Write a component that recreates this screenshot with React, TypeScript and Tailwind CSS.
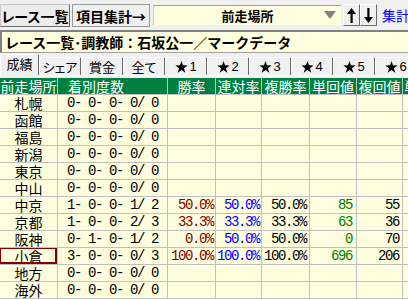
import React from "react";

const jp = "font-['Noto_Sans_CJK_JP','Noto_Sans_CJK_SC',sans-serif]";
const mono = "font-['Liberation_Mono','DejaVu_Sans_Mono',monospace] text-[14px] tracking-[-1.4px] whitespace-pre";

type Row = {
  place: string;
  counts: string;
  win?: string;
  ren?: string;
  fuku?: string;
  tan?: string;
  fkv?: string;
  sel?: boolean;
};

const rows: Row[] = [
  { place: "札幌", counts: "0- 0- 0- 0/ 0" },
  { place: "函館", counts: "0- 0- 0- 0/ 0" },
  { place: "福島", counts: "0- 0- 0- 0/ 0" },
  { place: "新潟", counts: "0- 0- 0- 0/ 0" },
  { place: "東京", counts: "0- 0- 0- 0/ 0" },
  { place: "中山", counts: "0- 0- 0- 0/ 0" },
  { place: "中京", counts: "1- 0- 0- 1/ 2", win: "50.0%", ren: "50.0%", fuku: "50.0%", tan: "85", fkv: "55" },
  { place: "京都", counts: "1- 0- 0- 2/ 3", win: "33.3%", ren: "33.3%", fuku: "33.3%", tan: "63", fkv: "36" },
  { place: "阪神", counts: "0- 1- 0- 1/ 2", win: "0.0%", ren: "50.0%", fuku: "50.0%", tan: "0", fkv: "70" },
  { place: "小倉", counts: "3- 0- 0- 0/ 3", win: "100.0%", ren: "100.0%", fuku: "100.0%", tan: "696", fkv: "206", sel: true },
  { place: "地方", counts: "0- 0- 0- 0/ 0" },
  { place: "海外", counts: "0- 0- 0- 0/ 0" },
];

const tabs = ["シェア", "賞金", "全て"];
const stars = ["1", "2", "3", "4", "5", "6"];

const cell = "h-[17px] border-r border-b border-[#c0c0c0] overflow-hidden";
const head = `${cell} bg-[#008040] text-white text-[14px] leading-[16px]`;
const body = `${cell} bg-[#ffffe0] leading-[16px]`;
const tab =
  "mt-[4px] h-[18px] w-[42px] shrink-0 bg-[#f0f0f0] border-t border-l border-white border-r border-r-[#696969] flex items-center justify-center text-[13px] leading-none [font-feature-settings:'palt']";

function Arrow({ up }: { up: boolean }) {
  return (
    <svg width="9" height="15" viewBox="0 0 9 15" className={up ? "" : "rotate-180"}>
      <polygon points="4.5,0 9,6 0,6" fill="#000" />
      <rect x="3.5" y="5" width="2.2" height="10" fill="#000" />
    </svg>
  );
}

function Star() {
  return (
    <svg width="13" height="12" viewBox="0 0 24 23" aria-hidden="true">
      <polygon
        points="12,0 14.9,8.3 23.7,8.5 16.7,13.8 19.2,22.3 12,17.3 4.8,22.3 7.3,13.8 0.3,8.5 9.1,8.3"
        fill="#000"
      />
    </svg>
  );
}

export default function App() {
  return (
    <div className={`w-[408px] h-[299px] overflow-hidden bg-[#f0f0f0] ${jp} text-black`}>
      {/* toolbar */}
      <div className="flex items-start h-[30px] w-[420px]">
        <div className="mt-[4px] h-[23px] w-[70px] shrink-0 bg-[#ececec] border border-[#c8c8c8] border-r-[#696969] border-b-[#696969] flex items-center justify-center font-bold text-[14px] [font-feature-settings:'palt'] leading-none">
          レース一覧
        </div>
        <div className="ml-[2px] mt-[4px] h-[23px] w-[78px] shrink-0 bg-[#f0f0f0] border border-[#9a9a9a] flex items-center justify-center font-bold text-[14px] leading-none">
          項目集計→
        </div>
        <div className="ml-[3px] mt-[5px] h-[20px] w-[188px] shrink-0 bg-[#ffffe0] border-t border-t-[#a0a0a0] border-l border-l-[#c8c8c8] relative flex items-center justify-center font-bold text-[13px] leading-none">
          前走場所
          <svg className="absolute right-[5px] top-[5px]" width="12" height="8" viewBox="0 0 12 8">
            <polygon points="0,0 12,0 6,8" fill="#808080" />
          </svg>
        </div>
        <div className="ml-[2px] mt-[4px] h-[22px] w-[17px] shrink-0 bg-[#f0f0f0] border border-white border-r-[#696969] border-b-[#696969] flex items-center justify-center">
          <Arrow up />
        </div>
        <div className="mt-[4px] h-[22px] w-[17px] shrink-0 bg-[#f0f0f0] border border-white border-r-[#696969] border-b-[#696969] flex items-center justify-center">
          <Arrow up={false} />
        </div>
        <div className="ml-[5px] mt-[8px] text-[14px] leading-none text-[#0000ff] whitespace-nowrap">
          集計表
        </div>
      </div>

      {/* title */}
      <div className="h-[23px] w-[420px] bg-[#ffffe0] border-t-2 border-l-2 border-t-[#808080] border-l-[#808080] border-b border-b-[#a0a0a0] flex items-center pl-[3px] font-bold text-[14px] leading-none whitespace-nowrap">
        レース一覧･調教師：石坂公一／マークデータ
      </div>

      {/* tabs */}
      <div className="flex items-start h-[22px] w-[420px]">
        <div className="mt-[1px] h-[21px] w-[39px] shrink-0 bg-[#f0f0f0] border-t border-l border-white border-r border-r-[#696969] flex items-start justify-center pt-[2px] text-[13px] leading-none">
          成績
        </div>
        {tabs.map((t) => (
          <div key={t} className={tab}>
            {t}
          </div>
        ))}
        {stars.map((s) => (
          <div key={s} className={`${tab} gap-[1px]`}>
            <Star />
            <span className="font-['Liberation_Sans',sans-serif] text-[13px] leading-none">{s}</span>
          </div>
        ))}
      </div>
      <div className="h-[3px] w-[420px] border-t border-white ml-[39px]" />

      {/* grid */}
      <div className="grid grid-cols-[58px_110px_48px_46px_48px_47px_46px_40px] w-[443px]">
        <div className={`${head} text-center`}>前走場所</div>
        <div className={`${head} pl-[10px]`}>着別度数</div>
        <div className={`${head} text-center`}>勝率</div>
        <div className={`${head} text-center`}>連対率</div>
        <div className={`${head} text-center`}>複勝率</div>
        <div className={`${head} text-center`}>単回値</div>
        <div className={`${head} text-center`}>複回値</div>
        <div className={`${head} pl-[1px]`}>単回</div>

        {rows.map((r) => (
          <React.Fragment key={r.place}>
            <div className={`${body} relative text-[14px] text-center`}>
              {r.place}
              {r.sel && <div className="absolute inset-0 border-2 border-[#800000] -mt-px -ml-px" />}
            </div>
            <div className={`${body} ${mono} pl-[9px]`}>{r.counts}</div>
            <div className={`${body} ${mono} text-right pr-[2px] text-[#800000]`}>{r.win ?? ""}</div>
            <div className={`${body} ${mono} text-right pr-[2px] text-[#0000ff]`}>{r.ren ?? ""}</div>
            <div className={`${body} ${mono} text-right pr-[3px]`}>{r.fuku ?? ""}</div>
            <div className={`${body} ${mono} text-right pr-[4px] text-[#008000]`}>{r.tan ?? ""}</div>
            <div className={`${body} ${mono} text-right pr-[3px]`}>{r.fkv ?? ""}</div>
            <div className={`${body}`} />
          </React.Fragment>
        ))}
      </div>
    </div>
  );
}
